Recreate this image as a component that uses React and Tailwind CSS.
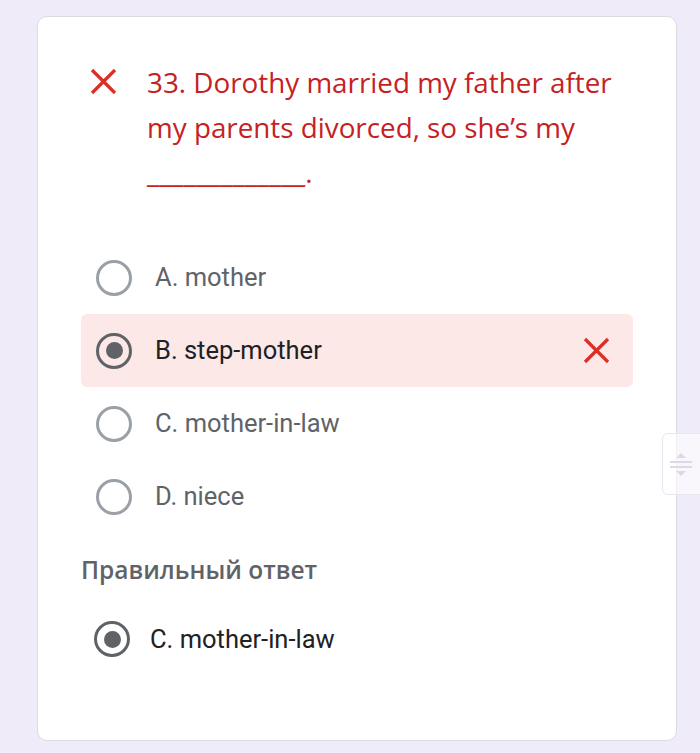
const options = [
  { id: 'A', label: 'A. mother' },
  { id: 'B', label: 'B. step-mother', picked: true, wrong: true },
  { id: 'C', label: 'C. mother-in-law' },
  { id: 'D', label: 'D. niece' },
]

function Cross({ size = 27, className = '' }) {
  return (
    <svg width={size} height={size} viewBox="0 0 27 27" className={className}>
      <path d="M2 2 L25 25 M25 2 L2 25" stroke="#d93025" strokeWidth="3.2" strokeLinecap="butt" fill="none" />
    </svg>
  )
}

function Radio({ checked }) {
  return (
    <div
      className={`w-[36px] h-[36px] rounded-full flex items-center justify-center shrink-0 border-[3.5px] ${
        checked ? 'border-[#5f6368]' : 'border-[#9aa0a6]'
      }`}
    >
      {checked && <div className="w-[17px] h-[17px] rounded-full bg-[#5f6368]" />}
    </div>
  )
}

export default function App() {
  return (
    <div className="relative w-[700px] h-[753px] bg-[#f0ebf8] pt-[16px] pl-[37px] overflow-hidden">
      <div className="w-[640px] h-[725px] bg-white rounded-[10px] border border-[#dadce0] px-[43px] pt-[43px]">
        {/* Question */}
        <div className="flex items-start pl-[9px]">
          <Cross className="mt-[8px] shrink-0" />
          <p
            className="ml-[30px] text-[27.8px] leading-[45px] text-[#c5221f] w-[480px]"
            style={{ fontFamily: '"Open Sans", Roboto, sans-serif' }}
          >
            33. Dorothy married my father after my parents divorced, so she’s my _____________.
          </p>
        </div>

        {/* Options */}
        <div className="mt-[46px] flex flex-col" style={{ fontFamily: 'Roboto, "Liberation Sans", sans-serif' }}>
          {options.map((o) => (
            <div
              key={o.id}
              className={`h-[73px] flex items-center pl-[15px] pr-[23px] rounded-[6px] ${
                o.wrong ? 'bg-[#fce8e6]' : ''
              }`}
            >
              <Radio checked={o.picked} />
              <span
                className={`ml-[23px] text-[25.5px] flex-1 ${o.picked ? 'text-[#202124]' : 'text-[#5f6368]'}`}
              >
                {o.label}
              </span>
              {o.wrong && <Cross />}
            </div>
          ))}
        </div>

        {/* Correct answer */}
        <div
          className="mt-[23px] text-[24.5px] leading-[28px] font-semibold text-[#5f6368]"
          style={{ fontFamily: '"Open Sans", Roboto, sans-serif' }}
        >
          Правильный ответ
        </div>
        <div
          className="mt-[19px] h-[72px] flex items-center pl-[13px]"
          style={{ fontFamily: 'Roboto, "Liberation Sans", sans-serif' }}
        >
          <Radio checked />
          <span className="ml-[20px] text-[25.5px] text-[#202124]">C. mother-in-law</span>
        </div>
      </div>

      {/* scroll handle */}
      <div className="absolute left-[662px] top-[433px] w-[50px] h-[62px] rounded-[6px] bg-white/60 border border-[#e9e6f0] flex flex-col items-center justify-center gap-[3px] pr-[12px]">
        <div className="w-0 h-0 border-l-[5px] border-r-[5px] border-b-[5px] border-l-transparent border-r-transparent border-b-[#dcd8e4]" />
        <div className="w-[22px] h-[2px] bg-[#dcd8e4]" />
        <div className="w-[22px] h-[2px] bg-[#dcd8e4]" />
        <div className="w-0 h-0 border-l-[5px] border-r-[5px] border-t-[5px] border-l-transparent border-r-transparent border-t-[#dcd8e4]" />
      </div>
    </div>
  )
}
